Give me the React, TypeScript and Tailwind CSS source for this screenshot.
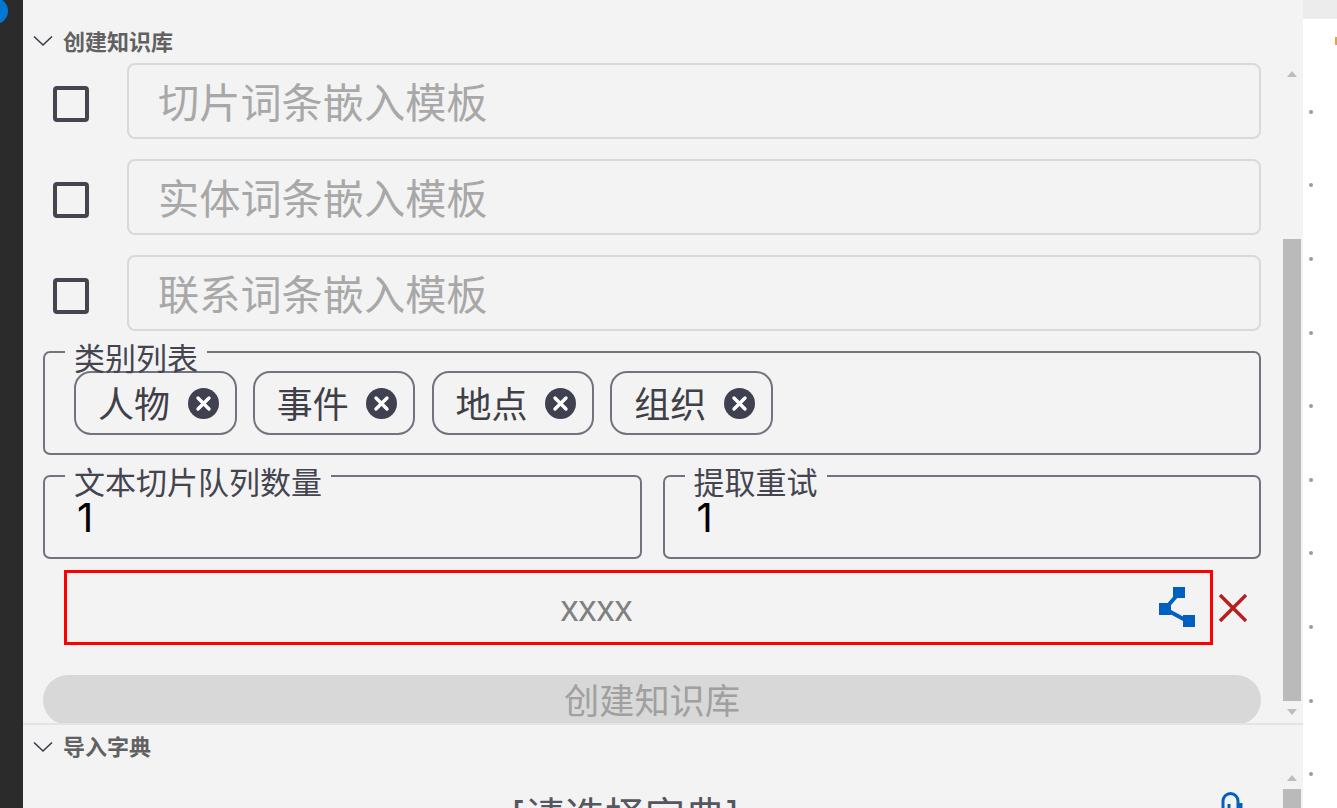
import React from 'react';

const FONT = "font-['Inter','Noto_Sans_CJK_SC',sans-serif]";

const Chevron = () => (
  <svg width="20" height="12" viewBox="0 0 20 12" fill="none" stroke="#3b3b45" strokeWidth="1.6">
    <path d="M1 1.5 L10 10 L19 1.5" />
  </svg>
);

const ScrollArrow = ({ up }: { up?: boolean }) => (
  <svg width="10" height="6" viewBox="0 0 10 6" fill="#bdbdbd" className="shrink-0">
    <path d={up ? 'M5 0 L10 6 L0 6 Z' : 'M0 0 L10 0 L5 6 Z'} />
  </svg>
);

const TemplateRow = ({ label }: { label: string }) => (
  <div className="flex items-center gap-[38px] pl-[10px]">
    <div className="mt-[6px] h-[36px] w-[36px] shrink-0 rounded-[4px] border-[4px] border-[#44454f]" />
    <div className="flex h-[76px] flex-1 items-center rounded-[8px] border-2 border-[#d9d9d9] pl-[29px] pt-[6px] text-[41.2px] leading-none text-[#a8a8a8]">
      {label}
    </div>
  </div>
);

const Chip = ({ label }: { label: string }) => (
  <div className="flex h-[64px] w-[162.5px] items-center justify-between rounded-[17px] border-2 border-[#737380] pl-[22px] pr-[16px] text-[36px] leading-none text-[#3f4047]">
    <span className="pt-[4px]">{label}</span>
    <svg width="31" height="31" viewBox="0 0 31 31">
      <circle cx="15.5" cy="15.5" r="15.5" fill="#3f4150" />
      <path d="M10 10 L21 21 M21 10 L10 21" stroke="#fff" strokeWidth="3.4" strokeLinecap="round" />
    </svg>
  </div>
);

const Field = ({ label, className, children }: { label: string; className: string; children: React.ReactNode }) => (
  <fieldset className={`rounded-[7px] border-2 border-[#737380] pl-[29px] ${className}`}>
    <legend className="ml-[-9px] h-[2px] px-[9px] text-[31px] leading-none text-[#44454f]">
      <span className="block translate-y-[-8px]">{label}</span>
    </legend>
    {children}
  </fieldset>
);

export default function App() {
  return (
    <div className={`relative flex h-[808px] w-[1337px] overflow-hidden bg-white ${FONT}`}>
      <div className="w-[23px] shrink-0 bg-[#2b2b2b]" />
      <div className="absolute left-[-18px] top-[-2px] h-[26px] w-[26px] rounded-full bg-[#0078d4]" />

      <main className="flex h-full w-[1280px] shrink-0 flex-col bg-[#f3f3f3]">
        <div className="flex h-[56px] shrink-0 items-end gap-[10px] pb-[1px] pl-[10px] text-[22px] font-bold leading-[26px] text-[#616161]">
          <span className="mb-[8px]"><Chevron /></span>
          <span>创建知识库</span>
        </div>

        <section className="flex h-[667px] shrink-0">
          <div className="flex min-w-0 flex-1 flex-col pl-[20px] pr-[22px] pt-[7px]">
            <div className="flex shrink-0 flex-col gap-[20px]">
              <TemplateRow label="切片词条嵌入模板" />
              <TemplateRow label="实体词条嵌入模板" />
              <TemplateRow label="联系词条嵌入模板" />
            </div>
            <Field label="类别列表" className="mt-[20px] h-[104px] shrink-0">
              <div className="mt-[18px] flex gap-[16.25px]">
                <Chip label="人物" />
                <Chip label="事件" />
                <Chip label="地点" />
                <Chip label="组织" />
              </div>
            </Field>
            <div className="mt-[20px] flex shrink-0 gap-[21px]">
              <Field label="文本切片队列数量" className="h-[84px] flex-1">
                <div className="mt-[19px] pl-[3px] text-[40px] leading-[44px] text-black">1</div>
              </Field>
              <Field label="提取重试" className="h-[84px] flex-1">
                <div className="mt-[19px] pl-[3px] text-[40px] leading-[44px] text-black">1</div>
              </Field>
            </div>
            <div className="mt-[11px] flex shrink-0 items-center">
              <div className="ml-[21px] flex h-[75px] w-[1149px] items-center border-[3px] border-[#ff0000] pr-[15px]">
                <span className="flex-1 pr-[33px] pt-[3px] text-center font-['Liberation_Sans',sans-serif] text-[36px] leading-none text-[#808080]">xxxx</span>
                <svg width="36" height="42" viewBox="0 0 36 42" fill="#0060c0">
                  <path d="M6 22 L20 6 M6 22 L30 35" stroke="#0060c0" strokeWidth="4" fill="none" />
                  <rect x="14" y="0" width="12" height="11" />
                  <rect x="0" y="16" width="12" height="12" />
                  <rect x="24" y="28" width="12" height="12" />
                </svg>
              </div>
              <svg className="ml-[6px]" width="28" height="28" viewBox="0 0 28 28" stroke="#b8201f" strokeWidth="3.5">
                <path d="M1 1 L27 27 M27 1 L1 27" />
              </svg>
            </div>
            <button className="mt-[30px] h-[50px] w-full shrink-0 rounded-[25px] bg-[#d8d8d8] pt-[3px] text-[35.2px] leading-none text-[#a0a0a0]">
              创建知识库
            </button>
          </div>
          <div className="mr-[2px] flex w-[18px] shrink-0 flex-col items-center pt-[15px]">
            <ScrollArrow up />
            <div className="mt-[162px] h-[462px] w-full shrink-0 bg-[#bababa]" />
            <div className="mt-[8px] flex"><ScrollArrow /></div>
          </div>
        </section>

        <div className="flex-1 border-t-2 border-[#e4e4e4]">
          <div className="flex h-[44px] items-center gap-[10px] pl-[10px] text-[22px] font-bold leading-none text-[#616161]">
            <Chevron />
            <span>导入字典</span>
          </div>
          <div className="flex h-[39px] overflow-hidden">
            <div className="relative flex-1 pr-[56px] pt-[28px] text-center text-[40px] leading-none text-[#55565f]">
              <span>[请选择字典]</span>
              <svg className="absolute right-[39px] top-[23px]" width="24" height="20" viewBox="0 0 24 20" fill="none" stroke="#0060c0" strokeWidth="3">
                <path d="M3 20 V9 a7.5 7.5 0 0 1 15 0 V20 M9 12 V20 M21 11 V20" />
              </svg>
            </div>
            <div className="mr-[2px] flex w-[18px] shrink-0 flex-col items-center pt-[6px]">
              <ScrollArrow up />
              <div className="mt-[8px] h-[30px] w-full shrink-0 bg-[#bababa]" />
            </div>
          </div>
        </div>
      </main>

      <aside className="relative flex-1">
        <div className="h-[19px] bg-[#ececec]" />
        <div className="flex flex-col pl-[6px] pt-[56px]">
          {Array.from({ length: 10 }).map((_, i) => (
            <div key={i} className="flex h-[73.6px] shrink-0 items-center">
              <span className="h-[4px] w-[4px] rounded-full bg-[#9a9aa6]" />
            </div>
          ))}
        </div>
        <div className="absolute right-0 top-[37px] h-[8px] w-[2px] bg-[#e8a04c]" />
      </aside>
    </div>
  );
}
